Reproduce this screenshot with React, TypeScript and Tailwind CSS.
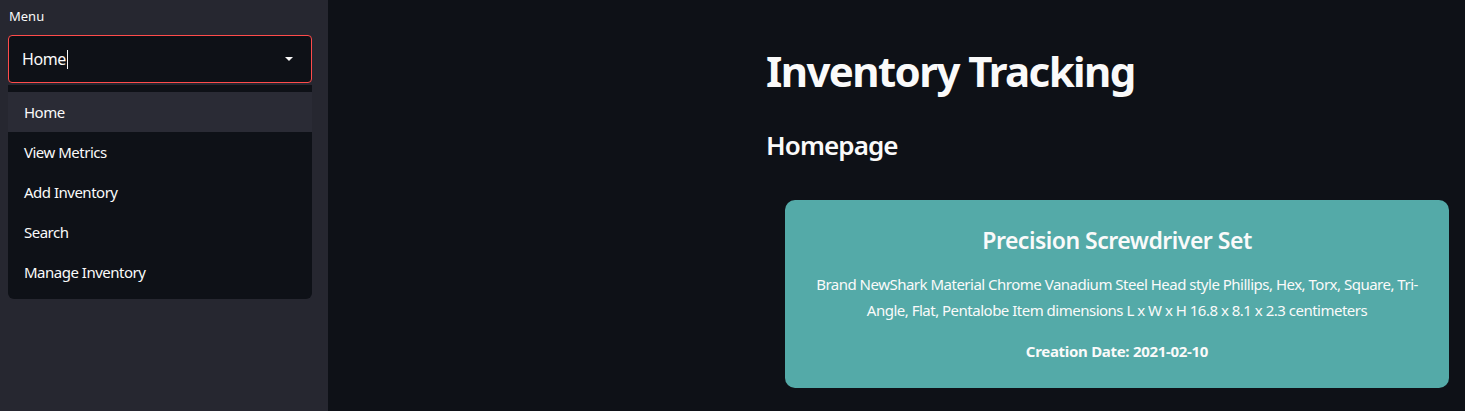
import React from "react";

const items = ["Home", "View Metrics", "Add Inventory", "Search", "Manage Inventory"];

export default function App() {
  return (
    <div
      className="flex h-[411px] w-full overflow-hidden bg-[#0e1117] text-[#fafafa]"
      style={{ fontFamily: '"Noto Sans", "Open Sans", sans-serif' }}
    >
      <aside className="flex w-[328px] shrink-0 flex-col bg-[#262730] pl-2 pr-4">
        <div className="mt-[8px] pl-[1px] text-[13px] leading-[16px] text-[#fafafa]">Menu</div>
        <div className="mt-[11px] flex h-[48px] items-center justify-between rounded-[4px] border border-[#ff4b4b] bg-[#0e1117] pl-[13px] pr-[17px]">
          <div className="flex items-center text-[16px] tracking-[-0.4px]">
            <span>Home</span>
            <span className="ml-[1px] inline-block h-[19px] w-[1px] bg-[#fafafa]" />
          </div>
          <svg width="10" height="6" viewBox="0 0 10 6">
            <path d="M1 1 L9 1 L5 5 Z" fill="#fafafa" />
          </svg>
        </div>
        <div className="mt-[2px] rounded-b-[6px] bg-[#0e1117] pb-[7px] pt-[7px]">
          {items.map((it, i) => (
            <div
              key={it}
              className={`flex h-[40px] items-center pl-[16px] text-[15px] tracking-[-0.5px] ${
                i === 0 ? "bg-[#2a2b35]" : ""
              }`}
            >
              {it}
            </div>
          ))}
        </div>
      </aside>
      <main className="flex-1 pl-[438px] pr-[16px]">
        <h1 className="mt-[43px] text-[42px] font-bold leading-[56px] tracking-[-1.6px]">
          Inventory Tracking
        </h1>
        <h3 className="mt-[28px] text-[26px] font-semibold leading-[36px] tracking-[-0.9px]">Homepage</h3>
        <div className="ml-[19px] mt-[37px] flex h-[188px] flex-col items-center rounded-[10px] bg-[#54aaa8] px-[24px] pt-[24px] text-center">
          <div className="text-[23px] font-semibold leading-[32px] tracking-[-0.5px]">Precision Screwdriver Set</div>
          <p className="mt-[15px] text-[15px] leading-[26px] tracking-[-0.5px]">
            Brand NewShark Material Chrome Vanadium Steel Head style Phillips, Hex, Torx, Square, Tri-Angle, Flat,
            Pentalobe Item dimensions L x W x H 16.8 x 8.1 x 2.3 centimeters
          </p>
          <p className="mt-[18px] text-[15px] font-bold leading-[20px] tracking-[-0.3px]">Creation Date: 2021-02-10</p>
        </div>
      </main>
    </div>
  );
}
